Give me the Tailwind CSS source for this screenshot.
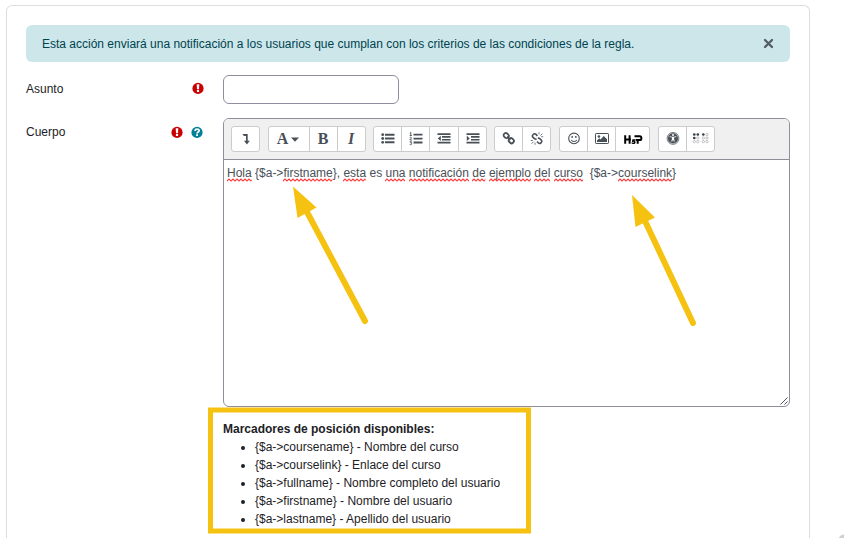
<!DOCTYPE html>
<html lang="es">
<head>
<meta charset="utf-8">
<title>Notificación</title>
<script src="https://cdn.jsdelivr.net/npm/@tailwindcss/browser@4"></script>
</head>
<body class="relative h-[538px] w-[844px] overflow-hidden bg-white font-['Liberation_Sans',Arial,sans-serif] text-[12px] leading-[18px] text-[#1d2125]">
<svg class="absolute size-0"><defs><pattern id="wave" width="4" height="4" patternUnits="userSpaceOnUse"><path d="M-1 2L0 3L2 1L4 3L5 2" fill="none" stroke="#ff3838" stroke-width="1.2"/></pattern></defs></svg>
<main class="ml-[6px] mt-[5px] h-[533px] w-[804px] rounded-t-[6px] border border-b-0 border-[#dcdddf] px-[19px] pt-[19px]">
  <div class="flex h-[37px] w-[764px] items-center justify-between rounded-[6px] bg-[#cce6ea] pl-4 pr-4 text-[#00434e]">
    <span>Esta acción enviará una notificación a los usuarios que cumplan con los criterios de las condiciones de la regla.</span>
    <svg class="size-[11px]" viewBox="0 0 11 11" fill="none" stroke="#525e62" stroke-width="2.3" stroke-linecap="round"><path d="M2 2l7 7M9 2l-7 7"/></svg>
  </div>

  <div class="mt-[13px] flex">
    <div class="flex w-[197px] justify-between pr-[19px] pt-[5px]">
      <span>Asunto</span>
      <svg class="mt-[2px] size-3" viewBox="0 0 12 12"><circle cx="6" cy="6.400" r="5.600" fill="#ca0000"/><path d="M4.700 2.300h2.600l-.3 4.900h-2zM4.900 8.100h2.200v2H4.900z" fill="#fff"/></svg>
    </div>
    <div class="h-[29px] w-[176px] rounded-[6px] border border-[#8f8ea0] bg-white"></div>
  </div>

  <div class="mt-[14px] flex">
    <div class="flex w-[197px] pr-[20px] pt-[5px]">
      <span class="grow">Cuerpo</span>
      <svg class="mt-[3px] mr-[8px] size-3" viewBox="0 0 12 12"><circle cx="6" cy="6.400" r="5.600" fill="#ca0000"/><path d="M4.700 2.300h2.600l-.3 4.900h-2zM4.900 8.100h2.200v2H4.900z" fill="#fff"/></svg>
      <svg class="mt-[3px] size-3" viewBox="0 0 12 12"><circle cx="6" cy="6.400" r="5.600" fill="#008196"/><path d="M3.900 4.900C4.200 3.700 5 3.200 6 3.200c1.200 0 2.100.6 2.100 1.600C8.100 6 6.100 6 6.100 7.400" fill="none" stroke="#fff" stroke-width="1.800"/><path d="M5.100 8.200h1.900v1.800H5.100z" fill="#fff"/></svg>
    </div>
    <div>
      <div class="relative h-[289px] w-[567px] overflow-hidden rounded-[6px] border border-[#8f8e9d] bg-white">
        <div class="flex h-[41px] gap-[8px] border-b border-[#8f8e9d] bg-[#f0f0f0] pl-[7px] pt-[7px] text-[#495057]">
          <div class="flex h-[26px] w-[29px] items-center justify-center rounded-[3px] border border-[#cbccce] bg-white">
            <svg class="size-[14px]" viewBox="0 0 14 14"><path d="M3.400 2h5.300v6.700h2.100L7.900 12.400 5 8.700h2V4H5z" fill="#495057"/></svg>
          </div>
          <div class="flex h-[26px] w-[98px] divide-x divide-[#cbccce] rounded-[3px] border border-[#cbccce] bg-white font-['Liberation_Serif',serif] text-[16px] font-bold">
            <div class="flex w-[41px] items-center justify-center gap-[3px] pr-[2px]"><span>A</span><svg class="h-[5px] w-[8px]" viewBox="0 0 8 5"><path d="M0 .5h8L4 4.700z" fill="#495057"/></svg></div>
            <div class="flex w-[28px] items-center justify-center pr-px">B</div>
            <div class="flex w-[27px] items-center justify-center pr-px italic">I</div>
          </div>
          <div class="-ml-px flex h-[26px] w-[114px] divide-x divide-[#cbccce] rounded-[3px] border border-[#cbccce] bg-white">
            <div class="flex w-[28px] items-center justify-center"><svg class="size-[14px]" viewBox="0 0 14 14" fill="#495057"><circle cx="1.700" cy="2.700" r="1.400"/><circle cx="1.700" cy="6.500" r="1.400"/><circle cx="1.700" cy="10.300" r="1.400"/><path d="M4 1.700h9.500v2H4zM4 5.500h9.500v2H4zM4 9.300h9.500v2H4z"/></svg></div>
            <div class="flex w-[28px] items-center justify-center"><svg class="size-[14px]" viewBox="0 0 14 14" fill="#495057"><path d="M4.500 1.800h9v1.800h-9zM4.500 5.700h9v1.800h-9zM4.500 9.600h9v1.800h-9z"/><path d="M.8 1.200l1-.7v3M.7 3.500h2.200M.7 5.600c1-.8 2-.2 1.600.6L.8 8h2.100M.7 9.800h2L1.600 11c1.800 0 1.400 2.300-.9 1.500" fill="none" stroke="#495057" stroke-width=".9"/></svg></div>
            <div class="flex w-[29px] items-center justify-center"><svg class="size-[14px]" viewBox="0 0 14 14" fill="#495057"><path d="M.5 1.300h13V3H.5zM5 4.100h8.500v1.700H5zM5 6.900h8.500v1.700H5zM.5 9.700h13v1.700H.5zM3.800 3.700v5.400L.8 6.400z"/></svg></div>
            <div class="flex w-[27px] items-center justify-center"><svg class="size-[14px]" viewBox="0 0 14 14" fill="#495057"><path d="M.5 1.300h13V3H.5zM5 4.100h8.500v1.700H5zM5 6.900h8.500v1.700H5zM.5 9.700h13v1.700H.5zM.8 3.700v5.400l3-2.700z"/></svg></div>
          </div>
          <div class="-ml-px flex h-[26px] w-[57px] divide-x divide-[#cbccce] rounded-[3px] border border-[#cbccce] bg-white">
            <div class="flex w-[28px] items-center justify-center"><svg class="size-[14px]" viewBox="0 0 14 14" fill="none" stroke="#495057" stroke-width="1.800"><rect x="1.600" y="1.400" width="5.200" height="4.400" rx="1.900" transform="rotate(45 4.200 3.600)"/><rect x="6.700" y="6.500" width="5.200" height="4.400" rx="1.900" transform="rotate(45 9.300 8.700)"/><path d="M5.200 4.700l3.100 3.100"/></svg></div>
            <div class="flex w-[27px] items-center justify-center"><svg class="size-[14px]" viewBox="0 .5 14 14" fill="none" stroke="#495057" stroke-width="1.600"><path d="M7.400 4.400L6 2.900C4.300 1.200 1.200 3.800 3 5.900l1.500 1.300c.7.5 1.500.5 2.100.1M7 10l1.200 1.300c1.800 1.800 4.700-.8 3-2.800L9.800 7.100c-.6-.5-1.400-.5-2-.2"/><path d="M9 .8v2M10.500 4l1.800-1.800M11.200 5.200h2M.8 9h2M3.600 10.200l-2 2M5 11.300v2" stroke-width=".8"/></svg></div>
          </div>
          <div class="flex h-[26px] w-[91px] divide-x divide-[#cbccce] rounded-[3px] border border-[#cbccce] bg-white">
            <div class="flex w-[28px] items-center justify-center"><svg class="size-[14px]" viewBox="0 0 14 14" fill="none" stroke="#495057" stroke-width="1.100"><circle cx="7" cy="6.400" r="5.300"/><path d="M4.300 7.900c.9 2.100 4.500 2.100 5.400 0"/><g fill="#495057" stroke="none"><circle cx="5.200" cy="4.900" r=".95"/><circle cx="8.800" cy="4.900" r=".95"/></g></svg></div>
            <div class="flex w-[28px] items-center justify-center"><svg class="size-[14px]" viewBox="0 0 14 14"><rect x=".5" y="1.500" width="13" height="10" rx=".7" fill="none" stroke="#495057"/><g fill="#495057"><circle cx="3.900" cy="4.500" r="1.300"/><path d="M2 10V8.500l2.300-2.200 1.200 1.100 3.300-3.300L12 7.300V10z"/></g></svg></div>
            <div class="flex w-[33px] items-center justify-center"><svg class="h-[12px] w-[20px]" viewBox="0 0 20 12"><g fill="none" stroke="#000" stroke-width="2"><path d="M2.200 2.200v8.600M6.600 2.200v8.600M2 6.600h6M14.700 7v3.800M11.500 3.200h5.300c2.100 0 2.100 3.900 0 3.900h-4"/></g><path d="M9.400 6.200h3v1.200h-1.500c2.500.3 2.200 3.700-.5 3.700-1.300 0-2-.6-2.200-1.500l1.500-.2c.5.700 1.400.3 1.100-.4-.3-.6-1.100-.4-1.900.1z" fill="#000"/></svg></div>
          </div>
          <div class="flex h-[26px] w-[57px] divide-x divide-[#cbccce] rounded-[3px] border border-[#cbccce] bg-white">
            <div class="flex w-[28px] items-center justify-center"><svg class="size-[14px]" viewBox="0 0 14 14"><circle cx="7" cy="6.400" r="5.900" fill="none" stroke="#495057" stroke-width=".8"/><circle cx="7" cy="6.400" r="5.100" fill="#495057"/><g fill="#fff"><circle cx="7" cy="3" r="1"/><path d="M3.700 4.200l2.500.5h1.600l2.500-.5.1.7-2.400.7.1 1.500.6 2.500-.7.2L7.100 7.900h-.2L6 9.800l-.7-.2.6-2.500.1-1.500-2.400-.7z"/></g></svg></div>
            <div class="flex w-[27px] items-center justify-center"><svg class="h-[12px] w-[17px]" viewBox="0 0 17 12"><g fill="#343c49"><circle cx="2.300" cy="1.500" r="1.300"/><circle cx="5.800" cy="1.500" r="1.300"/><circle cx="2.300" cy="5" r="1.300"/><circle cx="11.300" cy="1.500" r="1.300"/></g><g fill="#fff" stroke="#9d9fa4" stroke-width=".6"><circle cx="5.800" cy="5" r="1.200"/><circle cx="2.300" cy="8.600" r="1.200"/><circle cx="5.800" cy="8.600" r="1.200"/><circle cx="15" cy="1.500" r="1.200"/><circle cx="11.300" cy="5" r="1.200"/><circle cx="15" cy="5" r="1.200"/><circle cx="11.300" cy="8.600" r="1.200"/><circle cx="15" cy="8.600" r="1.200"/></g></svg></div>
          </div>
        </div>
        <p class="whitespace-pre pl-[3px] pt-[4px] text-[#495057]"><span class="relative">Hola<svg class="absolute left-0 top-[12px] h-[4px] w-full"><rect width="100%" height="4" fill="url(#wave)"/></svg></span> {$a-&gt;<span class="relative">firstname<svg class="absolute left-0 top-[12px] h-[4px] w-full"><rect width="100%" height="4" fill="url(#wave)"/></svg></span>}, <span class="relative">esta<svg class="absolute left-0 top-[12px] h-[4px] w-full"><rect width="100%" height="4" fill="url(#wave)"/></svg></span> es <span class="relative">una<svg class="absolute left-0 top-[12px] h-[4px] w-full"><rect width="100%" height="4" fill="url(#wave)"/></svg></span> <span class="relative">notificación<svg class="absolute left-0 top-[12px] h-[4px] w-full"><rect width="100%" height="4" fill="url(#wave)"/></svg></span> <span class="relative">de<svg class="absolute left-0 top-[12px] h-[4px] w-full"><rect width="100%" height="4" fill="url(#wave)"/></svg></span> <span class="relative">ejemplo<svg class="absolute left-0 top-[12px] h-[4px] w-full"><rect width="100%" height="4" fill="url(#wave)"/></svg></span> <span class="relative">del<svg class="absolute left-0 top-[12px] h-[4px] w-full"><rect width="100%" height="4" fill="url(#wave)"/></svg></span> <span class="relative">curso<svg class="absolute left-0 top-[12px] h-[4px] w-full"><rect width="100%" height="4" fill="url(#wave)"/></svg></span>  {$a-&gt;<span class="relative">courselink<svg class="absolute left-0 top-[12px] h-[4px] w-full"><rect width="100%" height="4" fill="url(#wave)"/></svg></span>}</p>
        <svg class="absolute bottom-0 right-0 size-[10px]" viewBox="0 0 10 10" stroke="#555" stroke-width="1"><path d="M1.500 8.500l7-7M5.500 8.500l3-3"/></svg>
      </div>
      <section class="relative -ml-[15.500px] h-[126px] w-[323px] translate-y-[0.500px] border-[5px] border-[#f6c211] pl-[10.500px] pt-[8px]">
        <div class="-translate-y-[0.500px]">
        <h2 class="font-bold">Marcadores de posición disponibles:</h2>
        <ul class="list-disc pl-8">
          <li>{$a-&gt;coursename} - Nombre del curso</li>
          <li>{$a-&gt;courselink} - Enlace del curso</li>
          <li>{$a-&gt;fullname} - Nombre completo del usuario</li>
          <li>{$a-&gt;firstname} - Nombre del usuario</li>
          <li>{$a-&gt;lastname} - Apellido del usuario</li>
        </ul>
        </div>
      </section>
    </div>
  </div>
</main>
<svg class="absolute left-0 top-0 h-[538px] w-[844px]" viewBox="0 0 844 538">
  <g fill="#f6c211" stroke="#f6c211">
    <path d="M307 212L365 321M645 221L693 323" stroke-width="6" stroke-linecap="round"/>
    <path d="M293 186.500L316.500 207.500L297.500 218zM632 195L655 217.500L635.500 227z" stroke="none"/>
  </g>
  <circle cx="844" cy="540" r="5.500" fill="#ced1d5"/>
</svg>
</body>
</html>
